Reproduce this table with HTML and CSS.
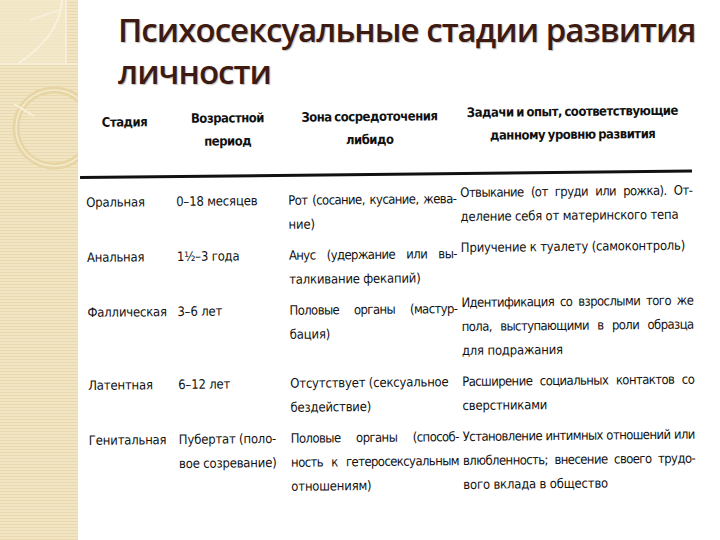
FILE: index.html
```html
<!DOCTYPE html>
<html lang="ru">
<head>
<meta charset="utf-8">
<title>Психосексуальные стадии развития личности</title>
<link rel="stylesheet" href="styles.css">
</head>
<body>
<div class="slide">
  <aside class="strip">
    <svg class="decor" width="78" height="540" viewBox="0 0 78 540" aria-hidden="true">
      <rect x="0" y="0" width="66" height="64" fill="#f3e9cc" opacity="0.7"/>
      <line x1="66" y1="0" x2="66" y2="64" stroke="#f7f0dc" stroke-width="1.5"/>
      <line x1="0" y1="64" x2="78" y2="64" stroke="#f7f0dc" stroke-width="1.5"/>
      <path d="M62 0 C 60 30, 40 48, 18 64" fill="none" stroke="#f8f1de" stroke-width="2"/>
      <path d="M30 20 L 60 10" fill="none" stroke="#f8f1de" stroke-width="1.5"/>
      <circle cx="54" cy="128" r="38" fill="none" stroke="#e7d6a4" stroke-width="7"/>
      <circle cx="54" cy="128" r="38" fill="none" stroke="#f4ead0" stroke-width="1.5"/>
      <path d="M34 116 L 14 104" fill="none" stroke="#f8f1de" stroke-width="1.5"/>
    </svg>
  </aside>
  <main class="main">
    <h1 class="title">Психосексуальные стадии развития<br>личности</h1>
    <section class="scan">
      <div class="head">
        <div class="hc h1c">Стадия</div>
        <div class="hc h2c">Возрастной<br>период</div>
        <div class="hc h3c">Зона сосредоточения<br>либидо</div>
        <div class="hc h4c">Задачи и опыт, соответствующие<br>данному уровню развития</div>
      </div>
      <div class="rule"></div>
      <div class="rows">
        <div class="row raised">
          <div class="c">Оральная</div>
          <div class="c">0–18 месяцев</div>
          <div class="c"><div class="j">Рот (сосание, кусание, жева-</div><div>ние)</div></div>
          <div class="c c4"><div class="j">Отвыкание (от груди или рожка). От-</div><div>деление себя от материнского тепа</div></div>
        </div>
        <div class="row raised">
          <div class="c">Анальная</div>
          <div class="c">1½–3 года</div>
          <div class="c"><div class="j">Анус (удержание или вы-</div><div>талкивание фекапий)</div></div>
          <div class="c c4"><div>Приучение к туалету (самоконтроль)</div></div>
        </div>
        <div class="row raised">
          <div class="c">Фаллическая</div>
          <div class="c">3–6 лет</div>
          <div class="c"><div class="j">Половые органы (мастур-</div><div>бация)</div></div>
          <div class="c c4"><div class="j">Идентификация со взрослыми того же</div><div class="j">пола, выступающими в роли образца</div><div>для подражания</div></div>
        </div>
        <div class="row">
          <div class="c">Латентная</div>
          <div class="c">6–12 лет</div>
          <div class="c"><div>Отсутствует (сексуальное</div><div>бездействие)</div></div>
          <div class="c c4"><div class="j">Расширение социальных контактов со</div><div>сверстниками</div></div>
        </div>
        <div class="row">
          <div class="c">Генитальная</div>
          <div class="c"><div>Пубертат (поло-</div><div>вое созревание)</div></div>
          <div class="c"><div class="j">Половые органы (способ-</div><div class="j">ность к гетеросексуальным</div><div>отношениям)</div></div>
          <div class="c c4"><div class="j">Установление интимных отношений или</div><div class="j">влюбленность; внесение своего трудо-</div><div>вого вклада в общество</div></div>
        </div>
      </div>
    </section>
  </main>
</div>
</body>
</html>
```

FILE: styles.css
```css
* { box-sizing: border-box; }
html, body { margin: 0; padding: 0; background: #ffffff; }
.slide {
  display: flex;
  width: 720px;
  height: 540px;
  overflow: hidden;
}
.strip {
  width: 78px;
  flex: 0 0 78px;
  height: 540px;
  background: repeating-linear-gradient(to bottom, #f1e5c4 0 2px, #e8d9b0 2px 3px);
}
.decor { display: block; }
.main {
  flex: 1;
  display: flex;
  flex-direction: column;
}
.title {
  margin: 0;
  padding: 9px 0 0 40px;
  font-family: "Open Sans", "Noto Sans", sans-serif;
  font-weight: 600;
  font-size: 33px;
  line-height: 42px;
  letter-spacing: -0.95px;
  color: #3e1b12;
  text-shadow: 1px 1px 1px rgba(0,0,0,0.25);
  white-space: nowrap;
}
.scan {
  margin-left: 2px;
  width: 612px;
  padding-top: 8px;
  font-family: "Liberation Sans Narrow", "DejaVu Sans Condensed", "Liberation Sans", sans-serif;
  font-stretch: condensed;
  color: #111;
  font-size: 13px;
  letter-spacing: -0.2px;
  line-height: 24px;
  transform: rotate(-0.6deg);
  transform-origin: 0 80px;
  white-space: nowrap;
}
.head, .row {
  display: grid;
  grid-template-columns: 90px 112px 172px 232px;
  padding-left: 6px;
}
.head {
  height: 75px;
  font-weight: bold;
  line-height: 23px;
  letter-spacing: -0.5px;
  word-spacing: -1px;
}
.hc { text-align: center; }
.h1c { padding-top: 10px; padding-right: 12px; }
.h2c { padding-top: 7px; padding-right: 8px; }
.h3c { padding-top: 7px; padding-right: 8px; }
.h4c { padding-top: 4px; padding-right: 6px; }
.rule {
  height: 3px;
  background: #111;
}
.rows {
  display: flex;
  flex-direction: column;
  gap: 7px;
  padding-top: 12px;
}
.c { padding-right: 4px; }
.c4 { padding-right: 0; }
.row.raised .c4 { margin-top: -6px; }
.j { text-align: justify; text-align-last: justify; word-spacing: -2px; letter-spacing: -0.6px; }
```
